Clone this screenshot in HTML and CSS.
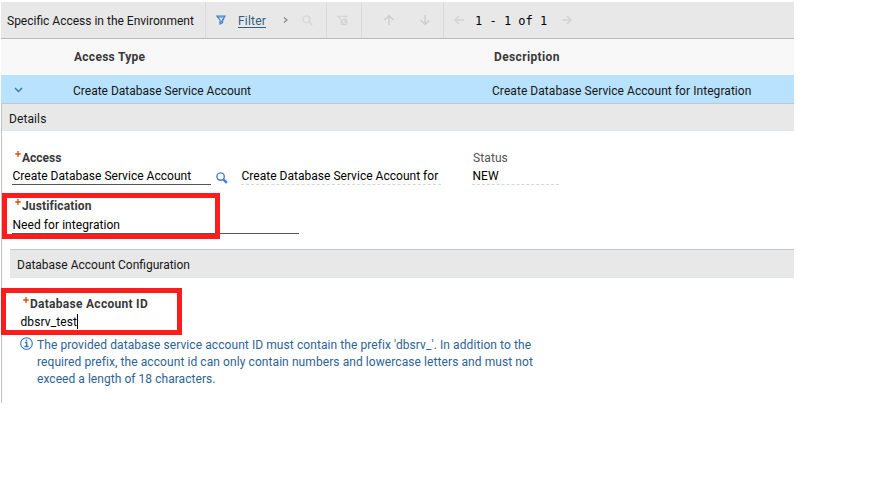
FILE: index.html
```
<!DOCTYPE html>
<html lang="en">
<head>
<meta charset="utf-8">
<title>Specific Access in the Environment</title>
<link rel="stylesheet" href="styles.css">
</head>
<body>
<main class="panel">
  <header class="toolbar">
    <div class="group title"><span class="t-title">Specific Access in the Environment</span></div>
    <div class="group filter">
      <svg class="i-funnel" width="10" height="10" viewBox="0 0 10 10" fill="none" stroke="#3f82d2" stroke-width="1.1"><path d="M.8 1h8.4L6.6 4.4v3.2L4 9V4.8z"/><path d="M1 2h8M8.2 3.6 4 7.8"/></svg>
      <a class="t-filter" href="#">Filter</a>
      <svg class="i-next" width="6" height="8" viewBox="0 0 6 8" fill="none" stroke="#8b8882" stroke-width="1.2"><path d="m1 1.5 3 2.5-3 2.5"/></svg>
      <svg class="i-find" width="11" height="11" viewBox="0 0 11 11" fill="none" stroke="#d5d5d5" stroke-width="1.1"><circle cx="4.5" cy="4.3" r="3.4"/><path d="m7.2 7 3 3" stroke-width="1.6"/></svg>
    </div>
    <div class="group clear">
      <svg width="11" height="11" viewBox="0 0 11 11" fill="none" stroke="#d2d2d2" stroke-width="1.1"><path d="M5 9.5 4 9V5L1 1.3h8.8L8.5 3"/><circle cx="7.4" cy="7" r="2.6"/><path d="m6 8.7 3-3.2"/></svg>
    </div>
    <div class="group move">
      <svg width="12" height="12" viewBox="0 0 12 12" fill="none" stroke="#cecece" stroke-width="1.5"><path d="M6 11V2M1.5 6 6 1.6 10.5 6"/></svg>
      <svg width="12" height="12" viewBox="0 0 12 12" fill="none" stroke="#cecece" stroke-width="1.5"><path d="M6 1v9M1.5 6 6 10.4 10.5 6"/></svg>
    </div>
    <div class="group pager">
      <svg width="10" height="10" viewBox="0 0 10 10" fill="none" stroke="#d2d2d2" stroke-width="1.4"><path d="M10 5H1.5M5 1 1 5l4 4"/></svg>
      <span class="t-page">1 - 1 of 1</span>
      <svg width="10" height="10" viewBox="0 0 10 10" fill="none" stroke="#d2d2d2" stroke-width="1.4"><path d="M0 5h8.5M5 1l4 4-4 4"/></svg>
    </div>
  </header>
  <div class="row head"><span></span><span class="t-h1">Access Type</span><span class="t-h2">Description</span></div>
  <div class="row selected">
    <svg class="i-down" width="9" height="6" viewBox="0 0 9 6" fill="none" stroke="#3a78c2" stroke-width="1.5"><path d="m1 1 3.5 3.5L8 1"/></svg>
    <span class="t-row">Create Database Service Account</span><span class="t-desc">Create Database Service Account for Integration</span>
  </div>
  <section class="details">
    <h2 class="bar"><span class="t-details">Details</span></h2>
    <div class="fields">
      <div class="field access">
        <label><svg class="star" width="6" height="6" viewBox="0 0 6 6"><path d="M2.3 0h1.4v2l2.3.4v1.2L3.7 4v2H2.3V4L0 3.6V2.4L2.3 2z"/></svg><b class="t-access">Access</b></label>
        <div class="value line"><span class="t-val">Create Database Service Account</span></div>
      </div>
      <svg class="i-lookup" width="12" height="12" viewBox="0 0 12 12" fill="none" stroke="#3f7fca" stroke-width="1.4"><circle cx="4.6" cy="4.6" r="3.7"/><path d="m7.6 7.6 3.2 3.2" stroke-width="2.4"/></svg>
      <div class="value readonly summary"><span class="t-sum">Create Database Service Account for</span></div>
      <div class="field status">
        <label class="t-status">Status</label>
        <div class="value readonly"><span class="t-new">NEW</span></div>
      </div>
    </div>
    <div class="field justification">
      <label><svg class="star" width="6" height="6" viewBox="0 0 6 6"><path d="M2.3 0h1.4v2l2.3.4v1.2L3.7 4v2H2.3V4L0 3.6V2.4L2.3 2z"/></svg><b class="t-just">Justification</b></label>
      <div class="value line"><span class="t-need">Need for integration</span></div>
    </div>
    <h2 class="bar sub"><span class="t-conf">Database Account Configuration</span></h2>
    <div class="field dbid">
      <label><svg class="star" width="6" height="6" viewBox="0 0 6 6"><path d="M2.3 0h1.4v2l2.3.4v1.2L3.7 4v2H2.3V4L0 3.6V2.4L2.3 2z"/></svg><b class="t-dbid">Database Account ID</b></label>
      <div class="value"><span class="t-test">dbsrv_test</span><i class="caret"></i></div>
    </div>
    <div class="hint">
      <svg width="13" height="13" viewBox="0 0 13 13" fill="none" stroke="#3474ba"><circle cx="6.5" cy="6.5" r="5.8" stroke-width="1.1"/><path d="M4.8 5.5h1.9v4M4.4 9.5h4.2" stroke-width="1.4"/><path d="M5.7 3.3h1.6" stroke-width="1.5"/></svg>
      <p><span class="t-l1">The provided database service account ID must contain the prefix 'dbsrv_'. In addition to the</span><br><span class="t-l2">required prefix, the account id can only contain numbers and lowercase letters and must not</span><br><span class="t-l3">exceed a length of 18 characters.</span></p>
    </div>
  </section>
  <div class="mark mark-justification"></div>
  <div class="mark mark-dbid"></div>
</main>
</body>
</html>
```
FILE: styles.css
```
* { box-sizing: border-box; }
body { margin: 0; background: #fff; color: #161616; font: 12px/16px Roboto, "Liberation Sans", sans-serif; white-space: nowrap; }
svg { display: block; flex: none; }
.panel { position: relative; width: 793px; margin: 2px 0 0 1px; }
.toolbar { display: flex; height: 37px; background: #e8e8e8; border-bottom: 1px solid #b9b9b9; }
.group { display: flex; align-items: center; height: 36px; border-right: 1px solid #dadada; }
.title { width: 205px; padding: 2px 0 0 6px; }
.filter { width: 121px; padding-left: 10px; }
.t-filter { width: 28px; margin: 2px 0 0 12px; color: #325c80; letter-spacing: .2px; text-decoration: underline; text-underline-offset: 2px; }
.i-next { margin-left: 17px; }
.i-find { margin-left: 13px; }
.clear { width: 35px; padding-left: 10px; }
.move { width: 82px; padding-left: 21px; gap: 24px; }
.pager { border: 0; padding-left: 10px; }
.t-page { width: 72px; margin: 1px 15px 0 11px; color: #000; font: 12px/16px "DejaVu Sans Mono", monospace; }
.row { display: grid; grid-template-columns: 72px 419px 1fr; align-items: center; }
.head { height: 36px; background: #f8f8f8; font-weight: 700; color: #393939; }
.head span { padding-left: 1px; letter-spacing: .27px; }
.head .t-h2 { padding-left: 2px; letter-spacing: .36px; }
.selected { height: 28px; background: #b8e2fd; color: #161616; padding-top: 4px; }
.t-desc { letter-spacing: .06px; }
.i-down { margin: -2px 0 0 13px; }
.details { height: 300px; border-left: 1px solid #c3c3c3; }
.bar { height: 28px; margin: 0; padding: 7px 0 0 7px; border-top: 1px solid #c2c8cb; border-bottom: 1px solid #dce7ed; background: #e8e8e8; font-size: 12px; font-weight: 400; line-height: 16px; }
.t-details { letter-spacing: .1px; }
.fields { display: flex; height: 63px; padding: 19px 0 0 10px; }
.field label { display: flex; height: 16px; color: #393939; }
.field b { margin-left: 1px; }
.t-just { letter-spacing: .15px; }
.t-dbid { letter-spacing: .28px; }
.star { margin: 1px 0 0 3px; fill: #dd5a22; }
.value { height: 19px; padding-top: 2px; color: #000; }
.line { border-bottom: 1px solid #565656; }
.readonly { border-bottom: 1px dashed #d8d8d8; }
.t-val, .t-sum, .t-new, .t-need { padding-left: .5px; letter-spacing: .02px; }
.t-need { letter-spacing: .06px; }
.access { width: 199px; }
.i-lookup { margin: 22px 0 0 5px; }
.summary { width: 200px; margin: 16px 0 0 13px; }
.status { width: 87px; margin-left: 31px; }
.status label { padding-left: 1px; color: #525252; letter-spacing: .1px; }
.justification { width: 287px; height: 55px; margin-left: 10px; padding-top: 5px; }
.justification label { margin-top: -1px; height: 17px; }
.sub { height: 29px; margin-left: 8px; }
.dbid { margin: 18px 0 0 18px; }
.dbid .value { display: flex; }
.t-test { padding-left: .5px; letter-spacing: .1px; }
.caret { width: 1px; height: 15px; background: #000; }
.hint { display: flex; margin: 6px 0 0 18px; color: #2e6393; }
.hint p { margin: 0 0 0 4px; line-height: 17px; letter-spacing: .08px; }
.t-l3 { letter-spacing: .05px; }
.mark { position: absolute; border: 5px solid #ff1c1c; }
.mark-justification { left: 1px; top: 191px; width: 218px; height: 46px; }
.mark-dbid { left: 0; top: 286px; width: 181px; height: 47px; }
```
